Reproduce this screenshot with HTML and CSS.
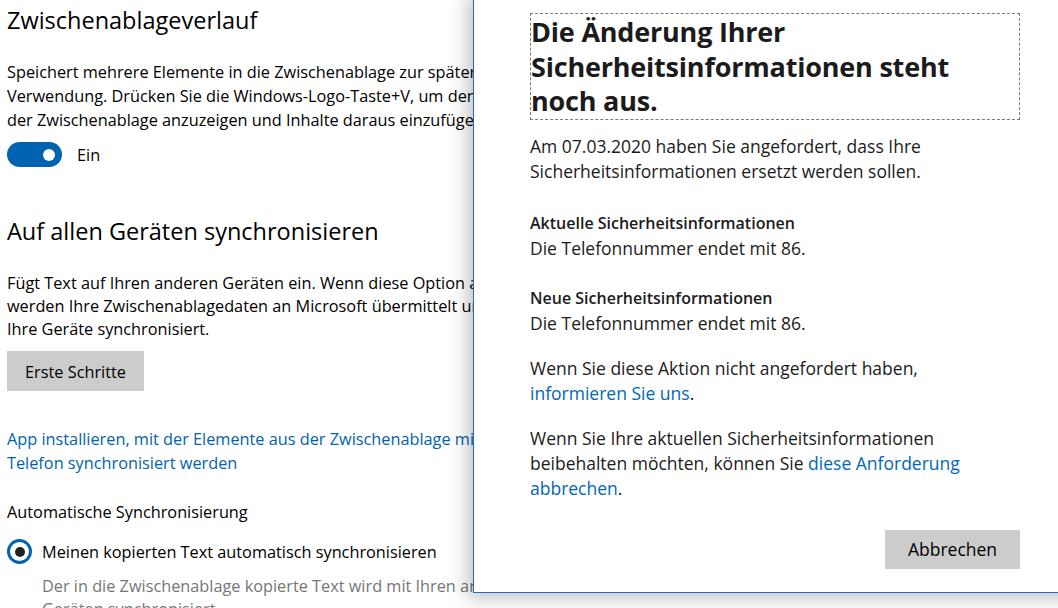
FILE: index.html
```html
<!DOCTYPE html>
<html lang="de">
<head>
<meta charset="utf-8">
<title>Zwischenablage</title>
<link rel="stylesheet" href="styles.css">
</head>
<body>
<div class="settings">
  <h1 class="s-title">Zwischenablageverlauf</h1>
  <p class="s-para p1">Speichert mehrere Elemente in die Zwischenablage zur späteren<br>Verwendung. Drücken Sie die Windows-Logo-Taste+V, um den Verlauf<br>der Zwischenablage anzuzeigen und Inhalte daraus einzufügen.</p>
  <div class="toggle-row">
    <span class="toggle"><span class="knob"></span></span>
    <span class="toggle-label">Ein</span>
  </div>
  <h2 class="s-title t2">Auf allen Geräten synchronisieren</h2>
  <p class="s-para p2">Fügt Text auf Ihren anderen Geräten ein. Wenn diese Option aktiviert ist,<br>werden Ihre Zwischenablagedaten an Microsoft übermittelt und über<br>Ihre Geräte synchronisiert.</p>
  <div class="s-btn">Erste Schritte</div>
  <p class="s-link">App installieren, mit der Elemente aus der Zwischenablage mit Ihrem<br>Telefon synchronisiert werden</p>
  <p class="s-label">Automatische Synchronisierung</p>
  <div class="radio-row">
    <span class="radio"><span class="dot"></span></span>
    <span class="radio-label">Meinen kopierten Text automatisch synchronisieren</span>
  </div>
  <p class="s-sub">Der in die Zwischenablage kopierte Text wird mit Ihren anderen<br>Geräten synchronisiert.</p>
</div>

<div class="dialog">
  <div class="d-inner">
    <h1 class="d-title">Die Änderung Ihrer<br>Sicherheitsinformationen steht<br>noch aus.</h1>
    <p class="d-p d-first">Am 07.03.2020 haben Sie angefordert, dass Ihre<br>Sicherheitsinformationen ersetzt werden sollen.</p>
    <div class="d-group g1">
      <div class="d-h">Aktuelle Sicherheitsinformationen</div>
      <div class="d-p">Die Telefonnummer endet mit 86.</div>
    </div>
    <div class="d-group g2">
      <div class="d-h">Neue Sicherheitsinformationen</div>
      <div class="d-p">Die Telefonnummer endet mit 86.</div>
    </div>
    <p class="d-p d-gap">Wenn Sie diese Aktion nicht angefordert haben,<br><span class="d-link">informieren Sie uns</span>.</p>
    <p class="d-p d-gap">Wenn Sie Ihre aktuellen Sicherheitsinformationen<br>beibehalten möchten, können Sie <span class="d-link">diese Anforderung<br>abbrechen</span>.</p>
    <div class="d-actions">
      <div class="d-btn">Abbrechen</div>
    </div>
  </div>
</div>
</body>
</html>
```

FILE: styles.css
```css
html, body {
  margin: 0;
  padding: 0;
  width: 1058px;
  height: 608px;
  overflow: hidden;
  background: #ffffff;
  font-family: "Open Sans", "Noto Sans", sans-serif;
  color: #000000;
}

.settings {
  padding-left: 7px;
  white-space: nowrap;
}

.s-title {
  margin: 0;
  font-weight: 400;
  font-size: 23.5px;
  line-height: 32px;
  padding-top: 4px;
  color: #000;
}

.t2 {
  margin-top: 44px;
}

.s-para {
  margin: 0;
  font-size: 16.3px;
  line-height: 24px;
}

.p1 { margin-top: 24px; }
.p2 { margin-top: 25px; line-height: 23px; }

.toggle-row {
  display: flex;
  align-items: center;
  gap: 15px;
  margin-top: 10px;
  height: 25px;
}

.toggle {
  width: 55px;
  height: 25px;
  border-radius: 13px;
  background: #0063b1;
  display: flex;
  align-items: center;
  justify-content: flex-end;
  padding-right: 7px;
  box-sizing: border-box;
}

.knob {
  width: 12px;
  height: 12px;
  border-radius: 50%;
  background: #fff;
}

.toggle-label {
  font-size: 16.3px;
}

.s-btn {
  margin-top: 10px;
  width: 137px;
  height: 40px;
  padding-top: 2px;
  box-sizing: border-box;
  background: #cccccc;
  display: flex;
  align-items: center;
  justify-content: center;
  font-size: 16.3px;
}

.s-link {
  margin: 36px 0 0;
  font-size: 16.3px;
  line-height: 24px;
  color: #0063b1;
}

.s-label {
  margin: 25px 0 0;
  font-size: 16.3px;
  line-height: 24px;
}

.radio-row {
  display: flex;
  align-items: center;
  gap: 10px;
  margin-top: 15px;
}

.radio {
  width: 25px;
  height: 25px;
  box-sizing: border-box;
  border: 3px solid #0063b1;
  border-radius: 50%;
  display: flex;
  align-items: center;
  justify-content: center;
}

.dot {
  width: 10px;
  height: 10px;
  border-radius: 50%;
  background: #222;
}

.radio-label {
  font-size: 16.3px;
}

.s-sub {
  margin: 11px 0 0 35px;
  font-size: 16.3px;
  line-height: 23px;
  color: #767676;
}

/* dialog overlay */
.dialog {
  position: absolute;
  left: 473px;
  top: -10px;
  width: 620px;
  height: 603px;
  background: #ffffff;
  border-left: 1px solid #1f6cb8;
  border-bottom: 1px solid #1f6cb8;
  box-shadow: -5px 5px 18px rgba(0, 0, 0, 0.25);
  color: #1b1b1b;
  box-sizing: border-box;
}

.d-inner {
  padding: 23px 0 0 56px;
  width: 490px;
}

.d-title {
  margin: 0;
  border: 1px dashed #7a7a7a;
  font-size: 27px;
  line-height: 34.5px;
  font-weight: 700;
  letter-spacing: -0.2px;
  padding: 1px 0 0;
  white-space: nowrap;
  color: #1b1b1b;
}

.d-p {
  margin: 0;
  font-size: 17.5px;
  line-height: 25px;
  white-space: nowrap;
}

.d-first { margin-top: 14px; }

.g1 { margin-top: 27px; }
.g2 { margin-top: 25px; }

.d-h {
  font-size: 16px;
  line-height: 25px;
  font-weight: 600;
}

.d-gap { margin-top: 20px; }

.d-link { color: #0067b8; }

.d-actions {
  display: flex;
  justify-content: flex-end;
  margin-top: 29px;
}

.d-btn {
  width: 135px;
  height: 39px;
  background: #cccccc;
  display: flex;
  align-items: center;
  justify-content: center;
  font-size: 17.5px;
  color: #000;
}
```
